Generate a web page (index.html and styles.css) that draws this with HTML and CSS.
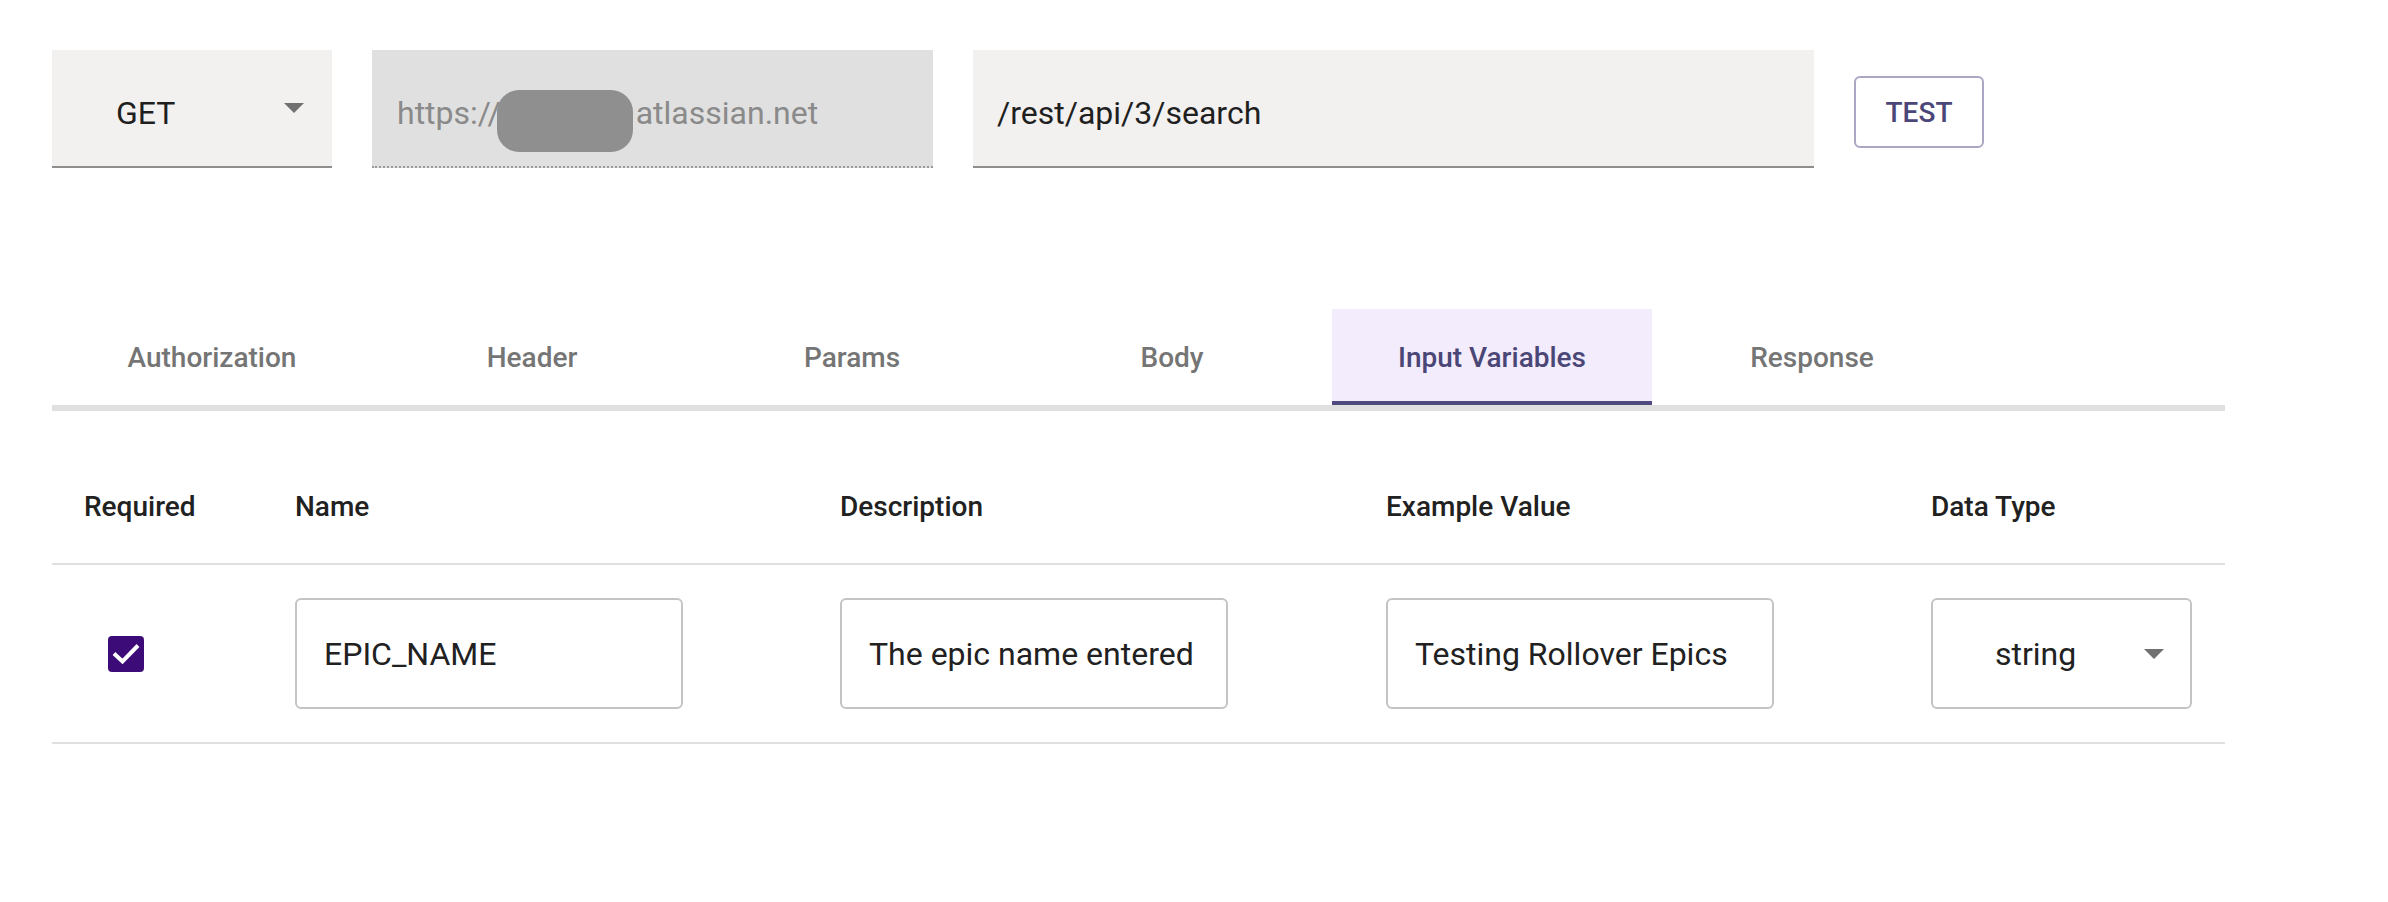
FILE: index.html
```html
<!DOCTYPE html>
<html lang="en">
<head>
<meta charset="utf-8">
<title>API Request</title>
<link rel="stylesheet" href="styles.css">
</head>
<body>
<div class="page">
  <div class="request-bar">
    <div class="field method">
      <span class="method-value">GET</span>
      <span class="caret"></span>
    </div>
    <div class="field base-url">
      <span>https://</span><span class="redact"></span><span>atlassian.net</span>
    </div>
    <div class="field path">/rest/api/3/search</div>
    <button class="test-btn">TEST</button>
  </div>

  <div class="tabs">
    <div class="tab">Authorization</div>
    <div class="tab">Header</div>
    <div class="tab">Params</div>
    <div class="tab">Body</div>
    <div class="tab active">Input Variables</div>
    <div class="tab">Response</div>
  </div>

  <div class="table">
    <div class="thead">
      <div class="th th-first">Required</div>
      <div class="th">Name</div>
      <div class="th">Description</div>
      <div class="th">Example Value</div>
      <div class="th">Data Type</div>
    </div>
    <div class="trow">
      <div class="td td-first">
        <span class="checkbox">
          <svg viewBox="0 0 36 36" width="36" height="36"><path d="M6 17.5l8.5 8 15.5-16" fill="none" stroke="#fff" stroke-width="4"/></svg>
        </span>
      </div>
      <div class="td"><div class="input">EPIC_NAME</div></div>
      <div class="td"><div class="input">The epic name entered</div></div>
      <div class="td"><div class="input">Testing Rollover Epics</div></div>
      <div class="td"><div class="select"><span>string</span><span class="caret"></span></div></div>
    </div>
  </div>
</div>
</body>
</html>
```

FILE: styles.css
```css
html, body {
  margin: 0;
  padding: 0;
  background: #ffffff;
}
body {
  font-family: Roboto, "Liberation Sans", Arial, sans-serif;
  color: #212121;
}
.page {
  padding: 50px 0 0 52px;
}
.request-bar {
  display: flex;
  align-items: center;
  gap: 40px;
}
.field {
  box-sizing: border-box;
  height: 118px;
  padding-top: 10px;
  display: flex;
  align-items: center;
  font-size: 32px;
}
.method {
  width: 280px;
  background: #f2f1f0;
  border-bottom: 2px solid #8e8e8e;
  padding-left: 64px;
  padding-right: 28px;
  justify-content: space-between;
  color: #1f1f1f;
}
.method .caret {
  margin-top: -10px;
}
.caret {
  width: 0;
  height: 0;
  border-left: 10px solid transparent;
  border-right: 10px solid transparent;
  border-top: 10px solid #707070;
}
.base-url {
  width: 561px;
  background: #e0e0e0;
  border-bottom: 2px dotted #9a9a9a;
  padding-left: 25px;
  color: #8a8a8a;
  white-space: nowrap;
}
.redact {
  display: inline-block;
  width: 136px;
  height: 62px;
  margin: 0 3px 0 -4px;
  border-radius: 22px;
  background: #8f8f8f;
  position: relative;
  top: 8px;
}
.path {
  width: 841px;
  background: #f2f1f0;
  border-bottom: 2px solid #8e8e8e;
  padding-left: 24px;
  color: #1f1f1f;
}
.test-btn {
  box-sizing: border-box;
  width: 130px;
  height: 72px;
  margin-top: 6px;
  background: #fff;
  border: 2px solid #aaa6c4;
  border-radius: 6px;
  color: #4b4779;
  font-family: Roboto, "Liberation Sans", Arial, sans-serif;
  font-size: 28px;
  font-weight: 500;
  padding: 0;
}
.tabs {
  margin-top: 141px;
  width: 2173px;
  display: flex;
  border-bottom: 6px solid #e0e0e0;
}
.tab {
  width: 320px;
  height: 96px;
  display: flex;
  align-items: center;
  justify-content: center;
  font-size: 28px;
  font-weight: 500;
  color: #757575;
}
.tab.active {
  background: #f3ecfc;
  color: #4a4676;
  box-shadow: inset 0 -4px 0 #4f4b7e;
}
.table {
  width: 2173px;
  margin-top: 48px;
}
.thead,
.trow {
  display: grid;
  grid-template-columns: 243px 545px 546px 545px 294px;
  border-bottom: 2px solid #e0e0e0;
}
.thead {
  padding: 32px 0 40px;
}
.th {
  font-size: 28px;
  font-weight: 500;
  line-height: 32px;
  color: #212121;
}
.th-first {
  padding-left: 32px;
}
.trow {
  height: 177px;
  align-items: center;
}
.td-first {
  padding-left: 56px;
}
.checkbox {
  width: 36px;
  height: 36px;
  border-radius: 4px;
  background: #3d0b78;
  display: flex;
  align-items: center;
  justify-content: center;
}
.input,
.select {
  box-sizing: border-box;
  height: 111px;
  border: 2px solid #c4c4c4;
  border-radius: 6px;
  display: flex;
  align-items: center;
  font-size: 32px;
  color: #212121;
  white-space: nowrap;
  overflow: hidden;
}
.input {
  width: 388px;
  padding-left: 27px;
}
.select {
  width: 261px;
  padding: 0 26px 0 62px;
  justify-content: space-between;
}
```
